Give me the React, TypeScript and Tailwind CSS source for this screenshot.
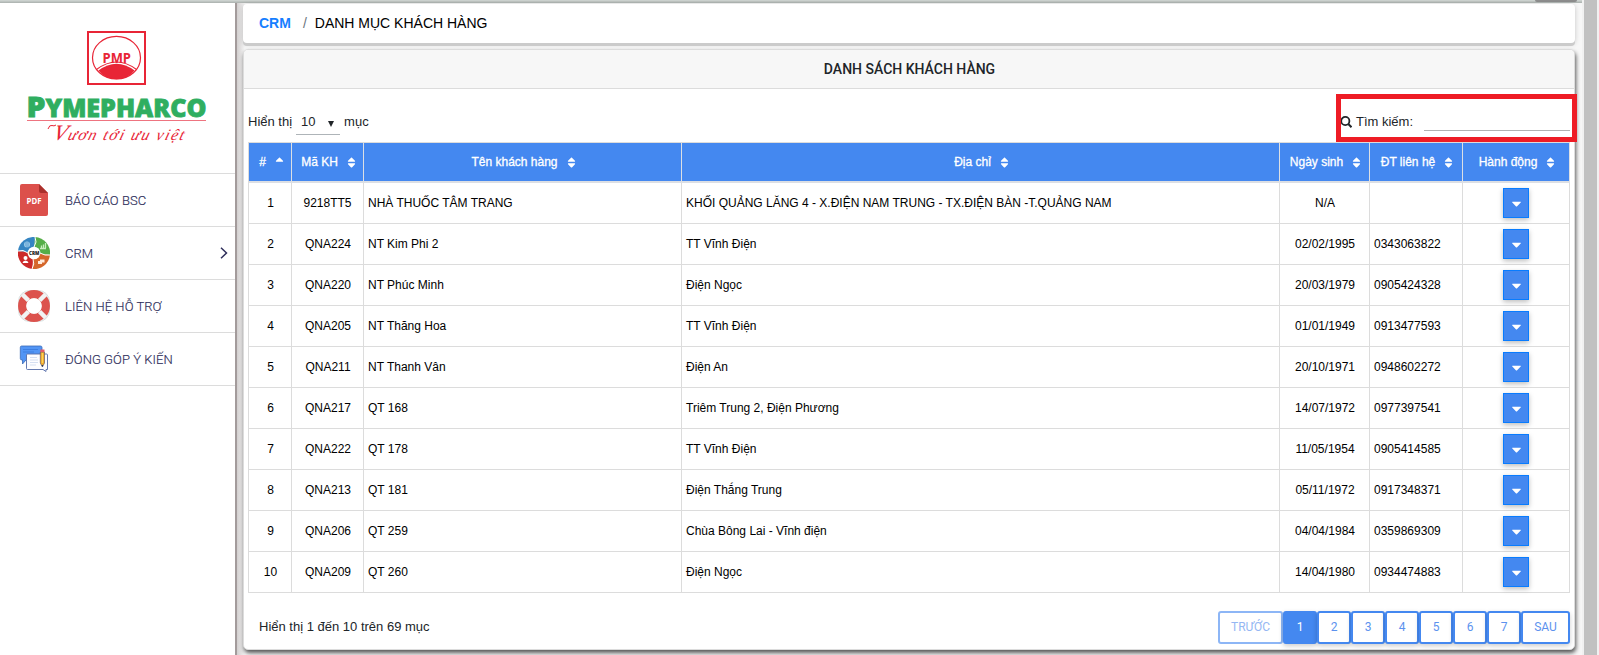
import React from "react";
import { FaSort, FaSortUp, FaCaretDown } from "react-icons/fa";

type Row = [string, string, string, string, string];

const rows: Row[] = [
  ["9218TT5", "NHÀ THUỐC TÂM TRANG", "KHỐI QUẢNG LĂNG 4 - X.ĐIỆN NAM TRUNG - TX.ĐIỆN BÀN -T.QUẢNG NAM", "N/A", ""],
  ["QNA224", "NT Kim Phi 2", "TT Vĩnh Điện", "02/02/1995", "0343063822"],
  ["QNA220", "NT Phúc Minh", "Điện Ngọc", "20/03/1979", "0905424328"],
  ["QNA205", "NT Thăng Hoa", "TT Vĩnh Điện", "01/01/1949", "0913477593"],
  ["QNA211", "NT Thanh Vân", "Điện An", "20/10/1971", "0948602272"],
  ["QNA217", "QT 168", "Triêm Trung 2, Điện Phương", "14/07/1972", "0977397541"],
  ["QNA222", "QT 178", "TT Vĩnh Điện", "11/05/1954", "0905414585"],
  ["QNA213", "QT 181", "Điện Thắng Trung", "05/11/1972", "0917348371"],
  ["QNA206", "QT 259", "Chùa Bông Lai - Vĩnh điện", "04/04/1984", "0359869309"],
  ["QNA209", "QT 260", "Điện Ngọc", "14/04/1980", "0934474883"],
];

const columns = [
  { label: "#", width: "w-[43px]" },
  { label: "Mã KH", width: "w-[72px]" },
  { label: "Tên khách hàng", width: "w-[318px]" },
  { label: "Địa chỉ", width: "w-[598px]" },
  { label: "Ngày sinh", width: "w-[90px]" },
  { label: "ĐT liên hệ", width: "w-[93px]" },
  { label: "Hành động", width: "w-[107px]" },
];

function Logo() {
  return (
    <svg width="235" height="170" viewBox="0 0 235 170" className="block">
      <rect x="88" y="29" width="57" height="52" fill="#fff" stroke="#e82536" strokeWidth="2" />
      <ellipse cx="116.5" cy="54.7" rx="24" ry="21.3" fill="none" stroke="#e82536" strokeWidth="1.2" />
      <path d="M98.500 67.500Q116.500 54 134.500 67.500Q128 76.300 116.500 76.300Q105 76.300 98.500 67.500Z" fill="#e82536" />
      <path d="M96.500 66.500Q116.500 51.500 136.500 66.500" fill="none" stroke="#e82536" strokeWidth="1.100" />
      <text x="102.500" y="59.500" textLength="28.500" lengthAdjust="spacingAndGlyphs" className="fill-[#e82536] font-['Open_Sans',sans-serif] text-[14.500px] font-bold">PMP</text>
      <g stroke="#2fae60" strokeWidth="0.800" className="fill-[#2fae60] font-['Open_Sans',sans-serif] font-extrabold">
        <text x="26.500" y="114.200" textLength="19" lengthAdjust="spacingAndGlyphs" className="text-[28px]">P</text>
        <text x="45.500" y="114.200" textLength="161" lengthAdjust="spacingAndGlyphs" className="text-[25px]">YMEPHARCO</text>
      </g>
      <path d="M27 117.500H206" stroke="#ee7480" strokeWidth="1.200" />
      <path d="M48 126Q49.500 121.500 52 122.500Q54 123.500 56 122" fill="none" stroke="#e82536" strokeWidth="1" />
      <g transform="translate(52 136.500) skewX(-16)">
        <text x="0" y="0" textLength="131" className="fill-[#e82536] font-['Liberation_Serif',serif] text-[16px] italic">
          <tspan fontSize="22">V</tspan>ươn tới ưu việt
        </text>
      </g>
    </svg>
  );
}

function PdfIcon() {
  return (
    <svg width="32" height="32" viewBox="0 0 32 32">
      <path d="M4 0H21L30 9V30Q30 32 28 32H4Q2 32 2 30V2Q2 0 4 0Z" fill="#dc504b" />
      <path d="M21 0L30 9H23Q21 9 21 7Z" fill="#aa302c" />
      <text x="8.500" y="20" textLength="15" lengthAdjust="spacingAndGlyphs" className="fill-white font-['Open_Sans',sans-serif] text-[8px] font-bold">PDF</text>
    </svg>
  );
}

function CrmIcon() {
  return (
    <svg width="32" height="32" viewBox="0 0 32 32">
      <path d="M16 16L0 14A16 16 0 0 1 17 0Z" fill="#3585c2" />
      <path d="M16 16L17 0A16 16 0 0 1 32 18Z" fill="#55ae48" />
      <path d="M16 16L32 18A16 16 0 0 1 14 32Z" fill="#d5672b" />
      <path d="M16 16L14 32A16 16 0 0 1 0 14Z" fill="#cc2929" />
      <path d="M17 0Q19.500 5 16 10M32 18Q27 19 22 16M14 32Q17 27 15 22M0 14Q5 12 10 16" stroke="#fff" strokeWidth="1" fill="none" />
      <circle cx="16" cy="16" r="6.300" fill="#fff" />
      <circle cx="9" cy="7.500" r="3" fill="#9acbe9" />
      <path d="M7 6H11M7 8H11M8 10H11" stroke="#3585c2" strokeWidth=".6" />
      <path d="M22 11.500H28M23.500 11V8.500M25.500 11V7.500M27.500 11V6" stroke="#c9edbf" strokeWidth="1.300" />
      <circle cx="7.500" cy="21" r="2" fill="#fff" />
      <path d="M4.500 26Q5 23.500 7.500 23.500T10.500 26Z" fill="#fff" />
      <path d="M20 24H24V27H20ZM22 22.500H26.500V25.500H22Z" fill="#ffeadb" />
      <text x="11" y="18.200" textLength="10.400" lengthAdjust="spacingAndGlyphs" className="fill-[#222] font-['Open_Sans',sans-serif] text-[5.500px] font-extrabold">CRM</text>
    </svg>
  );
}

function HelpIcon() {
  return (
    <svg width="32" height="32" viewBox="0 0 32 32">
      <rect x=".5" y=".5" width="31" height="31" rx="11" fill="#f1f3f3" stroke="#ccd4d4" strokeWidth=".7" />
      <circle cx="16" cy="16" r="11.800" fill="none" stroke="#dc524d" strokeWidth="8.300" />
      <path d="M4.500 4.500L10.500 10.500M27.500 4.500L21.500 10.500M4.500 27.500L10.500 21.500M27.500 27.500L21.500 21.500" stroke="#f1f3f3" strokeWidth="4.500" />
      <circle cx="16" cy="16" r="7.700" fill="#fff" />
    </svg>
  );
}

function FeedbackIcon() {
  return (
    <svg width="32" height="32" viewBox="0 0 32 32">
      <path d="M3.500 3H22.500Q24 3 24 4.500V17H8L4.500 21V17H4Q2.300 17 2.300 15.500V4.500Q2.300 3 3.500 3Z" fill="#5295f5" stroke="#3b69b6" strokeWidth=".8" />
      <path d="M5 6.500H20M5 9H16" stroke="#3979dc" strokeWidth=".8" />
      <path d="M9.500 11H28.500Q29.500 11 29.500 12V26.500H28V28.500L25 26.500H9.500Q8.500 26.500 8.500 25.500V12Q8.500 11 9.500 11Z" fill="#fdfdff" stroke="#536ba8" strokeWidth=".9" />
      <path d="M12 14.500H19M12 17H20M12 19.500H20M12 22H18" stroke="#d5dff2" strokeWidth="1" />
      <path d="M22.300 9H26.500V20L24.400 24L22.300 20Z" fill="#f4ad2d" stroke="#635a67" strokeWidth=".7" />
      <path d="M22.300 6.500H26.500V9H22.300Z" fill="#e55d67" />
      <path d="M24.400 10V20" stroke="#fddb62" />
      <path d="M23.600 22L24.400 24L25.200 22Z" fill="#26365d" />
    </svg>
  );
}

const menu = [
  { label: "BÁO CÁO BSC", icon: <PdfIcon />, arrow: false },
  { label: "CRM", icon: <CrmIcon />, arrow: true },
  { label: "LIÊN HỆ HỖ TRỢ", icon: <HelpIcon />, arrow: false },
  { label: "ĐÓNG GÓP Ý KIẾN", icon: <FeedbackIcon />, arrow: false },
];

function Sidebar() {
  return (
    <aside className="flex h-full w-[237px] shrink-0 flex-col border-r-2 border-[#a39b9b] bg-white">
      <div className="h-[171px] border-b border-[#dcdcdc]">
        <Logo />
      </div>
      {menu.map((item) => (
        <div key={item.label} className="flex h-[53px] items-center border-b border-[#dcdcdc] pl-[18px]">
          {item.icon}
          <span className="ml-[15px] grow pt-[2px] font-['Roboto',sans-serif] text-[13px] font-light tracking-[0.06px] text-[#30305c] [-webkit-text-stroke:0.15px_#30305c]">
            {item.label}
          </span>
          {item.arrow && (
            <svg width="8" height="12" viewBox="0 0 8 12" className="mr-[7px]">
              <path d="M1 .7L6.500 6L1 11.300" fill="none" stroke="#30305c" strokeWidth="1.500" />
            </svg>
          )}
        </div>
      ))}
    </aside>
  );
}

function CustomerTable() {
  return (
    <table className="ml-[4px] w-[1322px] table-fixed border-separate border-spacing-0 border-l border-t border-[#dcdcdc] text-[12px] leading-[18px]">
      <thead>
        <tr className="h-[40px] bg-[#4488f0] text-white">
          {columns.map((c, i) => (
            <th key={c.label} className={c.width + " border-b-2 border-r border-[#dcdfe4] p-0 font-normal"}>
              <span className="flex items-center justify-center pl-[4px] [-webkit-text-stroke:0.3px_#fff]">
                {c.label}
                {i === 0 ? (
                  <FaSortUp className="ml-[7px] mr-[-1px] mt-px size-[13px] [-webkit-text-stroke:0]" />
                ) : (
                  <FaSort className="ml-[7px] size-[13px]" />
                )}
              </span>
            </th>
          ))}
        </tr>
      </thead>
      <tbody className="text-black">
        {rows.map(([code, name, address, birth, phone], i) => (
          <tr key={code} className="h-[41px] [&>td]:border-b [&>td]:border-r [&>td]:border-[#dcdcdc] [&>td]:py-0">
            <td className="pl-px text-center">{i + 1}</td>
            <td className={i === 0 ? "px-0 text-center" : "pl-px text-center"}>{code}</td>
            <td className="px-[4px]">{name}</td>
            <td className="px-[4px]">{address}</td>
            <td className="pl-px text-center">{birth}</td>
            <td className="px-[4px]">{phone}</td>
            <td className="px-0">
              <button className="mx-auto flex h-[30px] w-[26px] items-center justify-center border border-[#087cff] bg-[#4488f0] text-white shadow-[0_2px_5px_rgba(0,0,0,0.26)]">
                <FaCaretDown className="size-[15px]" />
              </button>
            </td>
          </tr>
        ))}
      </tbody>
    </table>
  );
}

function Pagination() {
  const base = "flex h-[33px] items-center justify-center rounded-[3px] border-2 shadow-[0_2px_5px_rgba(0,0,0,0.2)] ";
  return (
    <div className="flex font-['Roboto',sans-serif] text-[12px] leading-[14px] text-[#5c92ee]">
      <span className="flex h-[33px] w-[65px] items-center justify-center rounded-[3px] border-2 border-[#8db6f6] pb-px text-[#94b7f3]">TRƯỚC</span>
      {[1, 2, 3, 4, 5, 6, 7].map((n) => (
        <span key={n} className={base + "w-[34px] border-[#4488f0] pb-px " + (n === 1 ? "bg-[#4488f0] text-white" : "bg-white")}>
          {n}
        </span>
      ))}
      <span className={base + "w-[49px] border-[#4488f0] bg-white pb-px"}>SAU</span>
    </div>
  );
}

export default function App() {
  return (
    <div className="flex h-[655px] w-[1599px] flex-col overflow-hidden bg-[#f1f1f1] font-['Liberation_Sans',Arial,sans-serif]">
      <div className="flex min-h-0 grow">
        <div className="flex w-[1582px] flex-col">
          <div className="flex h-[3px] shrink-0 justify-end bg-linear-to-b from-[#ccd2cf] from-20% to-[#a9b0ad] pr-[5px]">
            <div className="h-[2px] w-[42px] rounded-b-full bg-[#8d8d8d]" />
          </div>
          <div className="flex min-h-0 grow">
            <Sidebar />
            <main className="flex grow flex-col bg-linear-to-r from-[#d2cfcf] to-[#f7f7f7] to-[8px] pl-[6px] pr-[7px] pt-px">
              <nav className="flex h-[39px] shrink-0 items-center rounded-[4px] bg-white pl-[16px] text-[14px] text-black shadow-[0_3px_0_#cbcbcb,0_1px_5px_rgba(0,0,0,0.2)]">
                <b className="text-[#167eff]">CRM</b>
                <span className="ml-[12px] text-[#6c757d]">/</span>
                <span className="ml-[8px]">DANH MỤC KHÁCH HÀNG</span>
              </nav>
              <section className="mt-[6px] flex h-[601px] shrink-0 flex-col rounded-[5px] border border-[#dcdcdc] bg-white shadow-[1px_3px_4px_0px_rgba(0,0,0,0.65)]">
                <h1 className="flex h-[39px] shrink-0 items-center justify-center rounded-t-[4px] border-b border-[#dcdcdc] bg-[#f7f7f7] pl-px pt-px font-['Roboto',sans-serif] text-[14px] font-medium text-[#212529]">
                  DANH SÁCH KHÁCH HÀNG
                </h1>
                <div className="relative flex h-[53px] shrink-0 justify-between pl-[4px] pt-[22px] text-[13px] text-[#212529]">
                  <div className="flex h-[24px] items-center">
                    <span className="pb-[2px]">Hiển thị</span>
                    <span className="ml-[4px] flex h-[24px] w-[44px] items-center border-b border-[#aeb4b8] pb-px pl-[5px]">
                      10
                      <svg width="6" height="6" viewBox="0 0 6 6" className="ml-[12px] mt-[4px]">
                        <path d="M0 0H6L3 6Z" fill="#212529" />
                      </svg>
                    </span>
                    <span className="ml-[4px] pb-[2px]">mục</span>
                  </div>
                  <label className="flex h-[24px] items-center pr-[4px]">
                    <svg width="12" height="12" viewBox="0 0 12 12" className="mb-[3px]">
                      <circle cx="5.300" cy="5" r="4.100" fill="none" stroke="#212529" strokeWidth="1.800" />
                      <path d="M8.300 8L11.500 11.200" stroke="#212529" strokeWidth="2" />
                    </svg>
                    <span className="ml-[4px] pb-[2px]">Tìm kiếm:</span>
                    <span className="mb-[6px] ml-[11px] h-[22px] w-[146px] border-b border-[#b1b1b1]" />
                  </label>
                  <div className="absolute right-[-3px] top-[5px] h-[48px] w-[241px] border-[5px] border-[#ee1c25]" />
                </div>
                <CustomerTable />
                <div className="flex items-start justify-between pl-[15px] pr-[4px] pt-[18px] text-[13px] text-[#212529]">
                  <span className="pt-[6px]">Hiển thị 1 đến 10 trên 69 mục</span>
                  <Pagination />
                </div>
              </section>
            </main>
          </div>
        </div>
        <div className="ml-[2px] w-[13px] bg-[#c1c1c1]" />
      </div>
    </div>
  );
}
